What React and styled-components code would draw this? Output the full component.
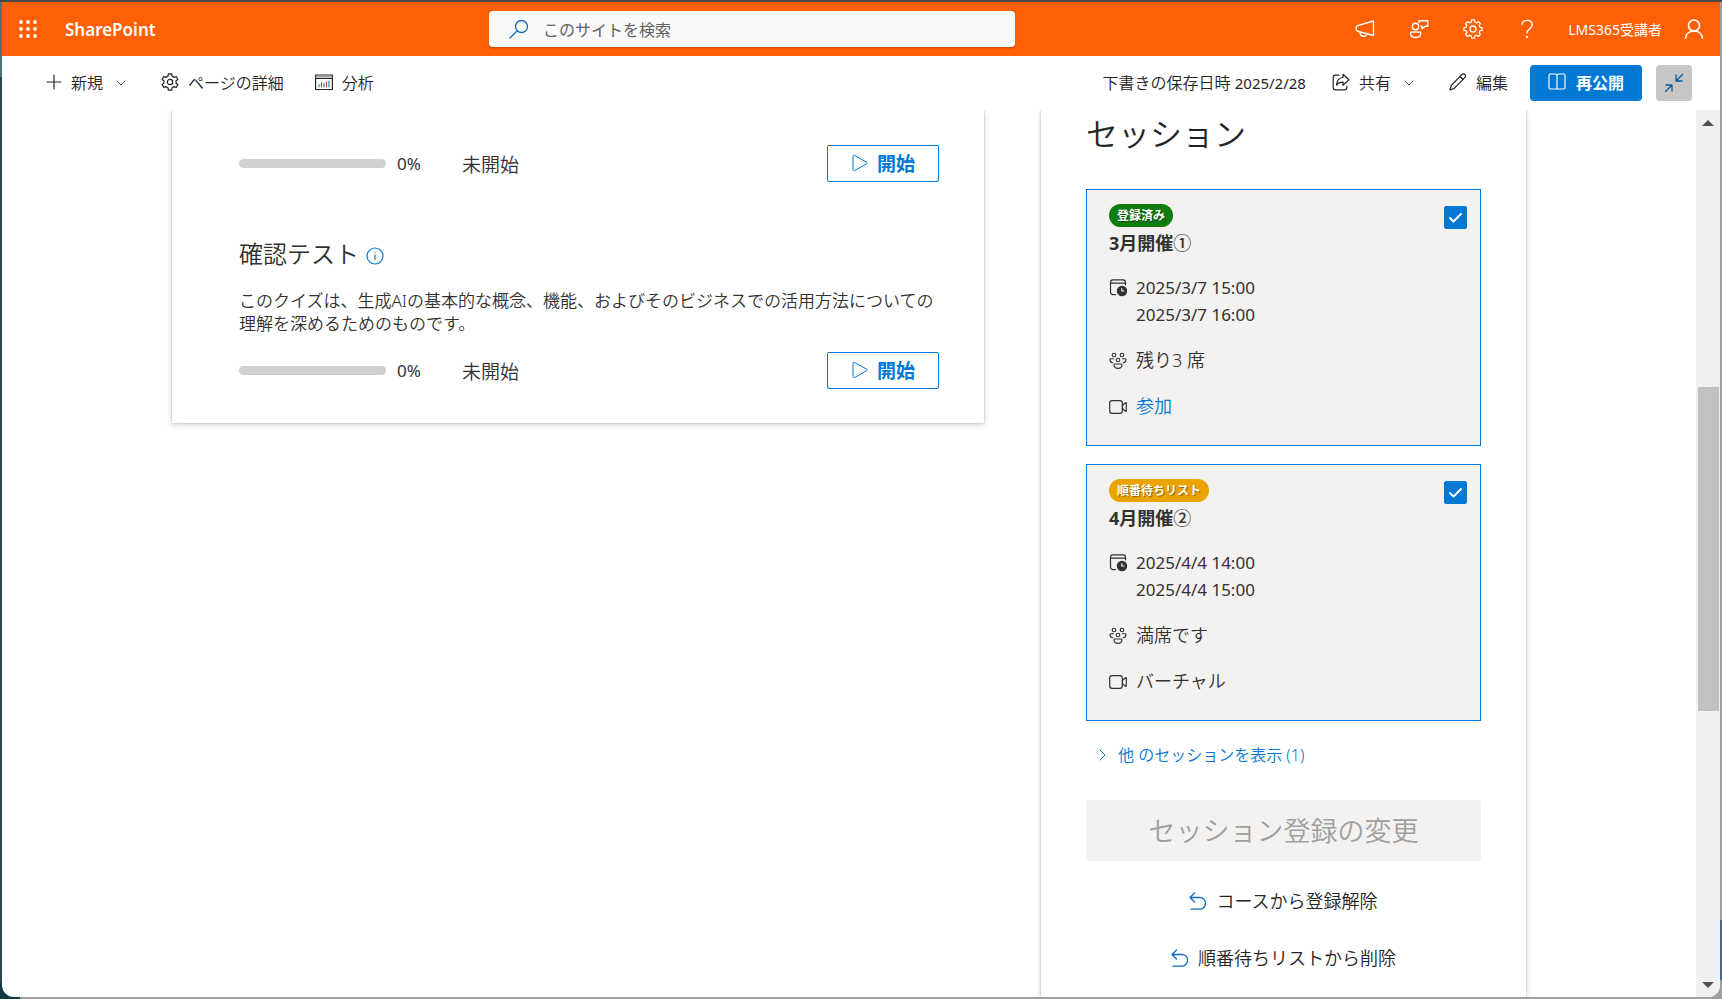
import React, { useState } from 'react';
import styled, { createGlobalStyle } from 'styled-components';

const GlobalStyle = createGlobalStyle`
  * {
    box-sizing: border-box;
  }

  body {
    margin: 0;
    color: #323130;
    font-family: 'Noto Sans', 'Noto Sans CJK JP', sans-serif;
    font-size: 16px;
    font-weight: 350;
  }

  button,
  input {
    font-family: inherit;
    font-weight: inherit;
    margin: 0;
    padding: 0;
  }

  h1, h2, h3, p {
    font-weight: inherit;
    margin: 0;
  }

  svg {
    display: block;
    flex: none;
  }
`;

/* Icons */

const Svg = ({ size = 18, stroke = 1, children }) => (
  <svg
    width={size}
    height={size}
    viewBox={`0 0 ${size} ${size}`}
    fill="none"
    stroke="currentColor"
    strokeWidth={stroke}
    strokeLinecap="round"
    strokeLinejoin="round"
    aria-hidden="true"
  >
    {children}
  </svg>
);

const gearPath = (teeth, outer, inner, center) => {
  const step = (Math.PI * 2) / teeth;
  const points = [];
  for (let i = 0; i < teeth; i += 1) {
    [
      [-0.3, inner],
      [-0.2, outer],
      [0.2, outer],
      [0.3, inner],
    ].forEach(([offset, radius]) => {
      const angle = (i + offset) * step - Math.PI / 2;
      const x = center + Math.cos(angle) * radius;
      const y = center + Math.sin(angle) * radius;
      points.push(`${x.toFixed(2)} ${y.toFixed(2)}`);
    });
  }
  return `M${points.join('L')}Z`;
};

const WaffleIcon = () => (
  <svg width="18" height="18" viewBox="0 0 18 18" fill="currentColor" aria-hidden="true">
    {[2, 9, 16].map((y) =>
      [2, 9, 16].map((x) => <circle key={`${x}-${y}`} cx={x} cy={y} r="1.9" />)
    )}
  </svg>
);

const SearchIcon = () => (
  <Svg size={20} stroke={1.3}>
    <circle cx="12.5" cy="7.5" r="6" />
    <path d="M8.2 11.8L1 19" />
  </Svg>
);

const MegaphoneIcon = () => (
  <Svg size={20} stroke={1.4}>
    <path d="M18.5 2v14.5L2.6 12.2C1.8 12 1.2 11.2 1.2 10.3V8.7C1.2 7.7 1.8 7 2.6 6.7Z" />
    <path d="M5 13c0 2.5 1.4 4.3 3.5 4.3 1.6 0 2.9-.9 3.3-2.4" />
  </Svg>
);

const FeedbackIcon = () => (
  <Svg size={20} stroke={1.4}>
    <circle cx="6.5" cy="7.5" r="3.2" />
    <path d="M2.7 13h7.8c.8 0 1.3.6 1.3 1.3 0 2.6-2 4.2-5.2 4.2s-5.2-1.6-5.2-4.2c0-.7.5-1.3 1.3-1.3Z" />
    <path d="M10 3.5V1.7h8.8v5.5h-2.6L13 9.8V7.2h-1" />
  </Svg>
);

const SettingsIcon = () => (
  <Svg size={20} stroke={1.3}>
    <path d={gearPath(8, 9.2, 7.2, 10)} />
    <circle cx="10" cy="10" r="3" />
  </Svg>
);

const HelpIcon = () => (
  <Svg size={20} stroke={1.4}>
    <path d="M5 5.5C5 3 7 1.4 10 1.4S15.2 3 15.2 5.7c0 4-5.2 4-5.2 8.3" />
    <circle cx="10" cy="18" r=".5" fill="currentColor" />
  </Svg>
);

const PersonIcon = () => (
  <Svg size={20} stroke={1.6}>
    <circle cx="10" cy="6.5" r="5.5" />
    <path d="M1.5 19.3C1.8 15 5 12 10 12s8.2 3 8.5 7.3" />
  </Svg>
);

const PlusIcon = () => (
  <Svg size={16} stroke={1.2}>
    <path d="M8 1v14M1 8h14" />
  </Svg>
);

const ChevronDownIcon = () => (
  <Svg size={10}>
    <path d="M1 3l4 4 4-4" />
  </Svg>
);

const ChevronRightIcon = () => (
  <Svg size={12}>
    <path d="M3 1l5 5-5 5" />
  </Svg>
);

const GearIcon = () => (
  <Svg stroke={1.2}>
    <path d={gearPath(6, 8.3, 6.2, 9)} />
    <circle cx="9" cy="9" r="2.7" />
  </Svg>
);

const AnalyticsIcon = () => (
  <Svg stroke={1.2}>
    <path d="M.6 2h16.8v14.5H.6ZM.6 5.5h16.8" />
    <path d="M.6 3.8h16.8" stroke="#777" strokeWidth="1" />
    <path d="M4 14v-2.5M9 14v-3.5M14 14V8" stroke="#2f7fc1" />
    <path d="M6.5 14V9.5M11.5 14V9" stroke="#a3512d" />
  </Svg>
);

const ShareIcon = () => (
  <Svg stroke={1.2}>
    <path d="M7 2.2H3.5C2.2 2.2 1.2 3.2 1.2 4.5v10c0 1.3 1 2.3 2.3 2.3h9c1.3 0 2.3-1 2.3-2.3V13" />
    <path d="M11 1.3l6 5.5-6 5.5V9.2c-3 0-5 .8-6.5 3C4.8 7.8 7.3 4.8 11 4.5Z" />
  </Svg>
);

const PencilIcon = () => (
  <Svg stroke={1.2}>
    <path d="M12.8 1.7c1-1 2.3-1 3.1-.2s.8 2.1-.2 3.1L5.2 15.4.9 17l1.4-4.5Z" />
    <path d="M11 3.5L14 6.5" />
  </Svg>
);

const BookIcon = () => (
  <Svg stroke={1.2}>
    <path d="M9 2v14M2.2 1h5.3C8.5 1 9 1.5 9 2.5 9 1.5 9.5 1 10.5 1h5.3c.8 0 1.2.4 1.2 1.2v12.6c0 .8-.4 1.2-1.2 1.2H2.2C1.4 16 1 15.6 1 14.8V2.2C1 1.4 1.4 1 2.2 1Z" />
  </Svg>
);

const CollapseIcon = () => (
  <Svg size={20} stroke={1.3}>
    <path d="M18.5 1.5L12 8M12 2v6h6M1.5 18.5L8 12M2 12h6v6" />
  </Svg>
);

const InfoIcon = () => (
  <Svg stroke={1.2}>
    <circle cx="9" cy="9" r="8" />
    <path d="M9 8v4.5M9 5.5v.2" />
  </Svg>
);

const PlayIcon = () => (
  <Svg>
    <path d="M2 2.2c0-.8.7-1.2 1.4-.8l12.3 6.8c.7.4.7 1.2 0 1.6L3.4 16.6c-.7.4-1.4 0-1.4-.8Z" />
  </Svg>
);

const CalendarClockIcon = () => (
  <Svg stroke={1.2}>
    <path d="M6.5 15.6H4c-1.5 0-2.5-1-2.5-2.5V3.3C1.5 1.8 2.5.8 4 .8h10c1.5 0 2.5 1 2.5 2.5v2.5M1.5 4.2h15" />
    <circle cx="13" cy="12" r="4.6" fill="currentColor" />
    <path d="M12.8 9.5V12H15" stroke="#f3f2f1" />
  </Svg>
);

const PeopleIcon = () => (
  <Svg stroke={1.1}>
    <circle cx="5" cy="3" r="1.8" />
    <circle cx="13" cy="3" r="1.8" />
    <circle cx="9" cy="8" r="1.8" />
    <path d="M5.8 12h6.4c.5 0 .8.3.8.8 0 2-1.6 3.6-4 3.6s-4-1.6-4-3.6c0-.5.3-.8.8-.8Z" />
    <path d="M4.5 6.8H1.8c-.5 0-.8.3-.8.8 0 1.7 1 3 2.8 3.2M13.5 6.8h2.7c.5 0 .8.3.8.8 0 1.7-1 3-2.8 3.2" />
  </Svg>
);

const VideoIcon = () => (
  <Svg stroke={1.2}>
    <rect x=".7" y="2.7" width="12.6" height="12.6" rx="2.3" />
    <path d="M13.3 7.5l3.2-2.8c.4-.3.8-.1.8.3v8c0 .4-.4.6-.8.3l-3.2-2.8" />
  </Svg>
);

const UndoIcon = () => (
  <Svg stroke={1.3}>
    <path d="M5.5 1L1 5.5 5.5 10M1 5.5h9.5c3.5 0 6 2.3 6 5.7s-2.5 6-6 6H2" />
  </Svg>
);

/* Window */

const Desktop = styled.div`
  background:
    linear-gradient(#464646, #464646) top / 100% 2px no-repeat,
    linear-gradient(#3a6a94, #3a6a94) right bottom 19px / 2px 60px no-repeat,
    linear-gradient(to right, #123a42 20px, transparent 20px) bottom / 100% 16px no-repeat,
    linear-gradient(#4a7578 77px, #24494f 77px) left / 2px 100% no-repeat,
    #a0a0a0;
  height: 100vh;
  padding: 2px;
`;

const Window = styled.div`
  background: #fff;
  border-radius: 0 0 12px 12px;
  display: flex;
  flex-direction: column;
  height: 100%;
  overflow: hidden;
`;

const SuiteBar = styled.header`
  align-items: center;
  background: #ff5f05;
  color: #fff;
  display: flex;
  flex: none;
  font-weight: 400;
  height: 54px;
  justify-content: space-between;
  padding: 0 16px;
`;

const SuiteStart = styled.div`
  align-items: center;
  display: flex;
  flex: 0 1 471px;
  gap: 27px;
`;

const IconButton = styled.button`
  align-items: center;
  background: none;
  border: 0;
  color: inherit;
  cursor: pointer;
  display: flex;
  height: 36px;
  justify-content: center;
  width: ${({ $width }) => $width || 20}px;
`;

const SuiteName = styled.a`
  color: inherit;
  font-size: 17px;
  font-weight: 600;
  text-decoration: none;
`;

const SearchBox = styled.label`
  align-items: center;
  background: #fafafa;
  border-radius: 4px;
  box-shadow: 0 1px 2px rgba(0, 0, 0, 0.25);
  color: #0f6cbd;
  display: flex;
  flex: 0 1 526px;
  gap: 14px;
  height: 36px;
  padding: 0 20px;
`;

const SearchInput = styled.input`
  background: none;
  border: 0;
  color: #323130;
  flex: 1;
  font-size: 16px;
  min-width: 0;
  outline: 0;
  padding-top: 2px;

  &::placeholder {
    color: #616161;
    opacity: 1;
  }
`;

const SuiteEnd = styled.div`
  align-items: center;
  display: flex;
  gap: 34px;
  margin-left: auto;
`;

const Account = styled.button`
  align-items: center;
  background: none;
  border: 0;
  color: inherit;
  cursor: pointer;
  display: flex;
  font-size: 14px;
  gap: 22px;
  margin-left: -3px;
  white-space: nowrap;
`;

const CommandBar = styled.nav`
  align-items: center;
  display: flex;
  flex: none;
  height: 54px;
  justify-content: space-between;
  padding: 0 28px 0 44px;
`;

const CommandGroup = styled.div`
  align-items: center;
  display: flex;
  gap: ${({ $gap }) => $gap}px;
`;

const Command = styled.button`
  align-items: center;
  background: none;
  border: 0;
  color: #242424;
  cursor: pointer;
  display: flex;
  font-size: 16px;
  gap: 9px;
  height: 36px;
  padding-bottom: 2px;
  white-space: nowrap;

  svg:last-child:not(:first-child) {
    color: #605e5c;
    margin: 2px 4px 0;
  }
`;

const SavedAt = styled.span`
  color: #242424;
  padding-bottom: 2px;
  white-space: nowrap;
`;

const DateText = styled.span`
  font-size: 15px;
  font-weight: 400;
`;

const PrimaryButton = styled.button`
  align-items: center;
  background: #0078d4;
  border: 0;
  border-radius: 4px;
  color: #fff;
  cursor: pointer;
  display: flex;
  font-size: 16px;
  font-weight: 700;
  gap: 10px;
  height: 36px;
  padding: 0 18px 2px;
  white-space: nowrap;
`;

const CollapseButton = styled(IconButton)`
  background: #c8c6c4;
  border-radius: 4px;
  color: #005a9e;
  margin-left: -8px;
`;

/* Page body */

const Body = styled.div`
  display: flex;
  flex: 1;
  min-height: 0;
`;

const Content = styled.main`
  align-items: flex-start;
  display: flex;
  flex: 1;
  gap: 57px;
  justify-content: center;
  overflow: hidden;
  padding: 0 32px;
`;

const Panel = styled.section`
  background: #fff;
  box-shadow: 0 2px 6px rgba(0, 0, 0, 0.16), 0 0 2px rgba(0, 0, 0, 0.24);
`;

const CoursePanel = styled(Panel)`
  flex: 0 1 812px;
  padding: 35px 45px 34px 67px;
`;

const SessionPanel = styled(Panel)`
  align-self: stretch;
  flex: 0 0 485px;
  padding: 3px 45px 27px;
`;

const ProgressRow = styled.div`
  align-items: center;
  display: flex;
  height: 37px;
`;

const Track = styled.div`
  background: #d2d0ce;
  border-radius: 5px;
  height: 9px;
  margin-right: 11px;
  overflow: hidden;
  width: 147px;
`;

const Fill = styled.div`
  background: #0078d4;
  height: 100%;
`;

const Percent = styled.span`
  font-size: 17px;
  font-weight: 400;
  width: 65px;
`;

const Status = styled.span`
  font-size: 19px;
`;

const StartButton = styled.button`
  align-items: center;
  background: #fff;
  border: 1px solid #0078d4;
  border-radius: 2px;
  color: #0078d4;
  cursor: pointer;
  display: flex;
  font-size: 19px;
  font-weight: 700;
  gap: 8px;
  height: 37px;
  justify-content: center;
  margin-left: auto;
  padding-bottom: 2px;
  width: 112px;
`;

const ItemTitle = styled.h2`
  align-items: center;
  display: flex;
  font-size: 24px;
  gap: 7px;
  line-height: 36px;
  margin-top: 54px;
`;

const InfoButton = styled(IconButton)`
  color: #0078d4;
  height: 18px;
  margin-top: 4px;
`;

const Description = styled.p`
  font-size: 17px;
  line-height: 23px;
  margin: 17px 0;
`;

const SessionHeading = styled.h1`
  color: #242424;
  font-size: 32px;
  line-height: 42px;
  margin-bottom: 34px;
`;

const SessionList = styled.div`
  display: flex;
  flex-direction: column;
  gap: 18px;
`;

const SessionCard = styled.article`
  background: #f3f2f1;
  border: 1px solid #0078d4;
  display: flex;
  justify-content: space-between;
  padding: 14px 13px 6px 22px;
`;

const Badge = styled.span`
  background: ${({ $color }) => $color};
  border-radius: 12px;
  color: #fff;
  display: inline-block;
  font-size: 12px;
  font-weight: 700;
  line-height: 23px;
  padding: 0 8px;
  text-shadow: 1px 1px 1px rgba(0, 0, 0, 0.4);
  vertical-align: top;
`;

const SessionTitle = styled.h3`
  font-size: 18px;
  font-weight: 700;
  line-height: 32px;
  margin-bottom: 15px;
`;

const CircledNumber = styled.span`
  font-weight: 500;
`;

const Detail = styled.div`
  align-items: flex-start;
  display: flex;
  font-size: 18px;
  gap: 9px;
  line-height: 27px;
  margin-bottom: 19px;

  > svg {
    margin-top: 5px;
  }
`;

const Times = styled.div`
  font-size: 17px;
  font-weight: 400;
`;

const BlueLink = styled.a`
  color: #0078d4;
  text-decoration: none;
`;

const CheckWrapper = styled.label`
  display: grid;
  height: 23px;
  margin-top: 2px;
  width: 23px;

  > * {
    grid-area: 1 / 1;
    place-self: center;
  }

  svg {
    color: #fff;
    pointer-events: none;
  }
`;

const CheckInput = styled.input`
  appearance: none;
  background: #fff;
  border: 1px solid #0078d4;
  border-radius: 2px;
  height: 23px;
  width: 23px;

  &:checked {
    background: #0078d4;
  }
`;

const MoreLink = styled(BlueLink)`
  align-items: center;
  display: flex;
  font-size: 16px;
  gap: 9px;
  line-height: 24px;
  margin: 22px 0 33px 11px;
`;

const ChangeButton = styled.button`
  background: #f3f2f1;
  border: 0;
  border-radius: 2px;
  color: #a19f9d;
  font-size: 27px;
  height: 61px;
  padding-bottom: 2px;
  width: 100%;
`;

const Actions = styled.div`
  align-items: center;
  display: flex;
  flex-direction: column;
  gap: 33px;
  margin-top: 28px;
`;

const ActionButton = styled.button`
  align-items: center;
  background: none;
  border: 0;
  color: #242424;
  cursor: pointer;
  display: flex;
  font-size: 18px;
  gap: 9px;
  line-height: 24px;

  svg {
    color: #0f6cbd;
  }
`;

const Scrollbar = styled.div`
  align-items: center;
  background: #f0f0f0;
  color: #505050;
  display: flex;
  flex: none;
  flex-direction: column;
  padding: 10px 0 9px;
  width: 24px;
`;

const ScrollTrack = styled.div`
  display: grid;
  flex: 1;
  grid-template-rows: 261fr 324fr 271fr;
  width: 21px;
`;

const Thumb = styled.div`
  background: #c1c1c1;
  grid-row: 2;
`;

const sessions = [
  {
    id: 'march',
    badge: '登録済み',
    color: '#107c10',
    title: '3月開催',
    number: '①',
    start: '2025/3/7 15:00',
    end: '2025/3/7 16:00',
    seats: '残り3 席',
    link: '参加',
  },
  {
    id: 'april',
    badge: '順番待ちリスト',
    color: '#eaa300',
    title: '4月開催',
    number: '②',
    start: '2025/4/4 14:00',
    end: '2025/4/4 15:00',
    seats: '満席です',
    place: 'バーチャル',
  },
];

function Progress({ value }) {
  return (
    <ProgressRow>
      <Track role="progressbar" aria-valuenow={value} aria-label="進行状況">
        <Fill style={{ width: `${value}%` }} />
      </Track>
      <Percent>{value}%</Percent>
      <Status>未開始</Status>
      <StartButton type="button">
        <PlayIcon />
        開始
      </StartButton>
    </ProgressRow>
  );
}

function Session({ session }) {
  const [checked, setChecked] = useState(true);

  return (
    <SessionCard>
      <div>
        <Badge $color={session.color}>{session.badge}</Badge>
        <SessionTitle>
          {session.title}
          <CircledNumber>{session.number}</CircledNumber>
        </SessionTitle>
        <Detail>
          <CalendarClockIcon />
          <Times>
            <div>{session.start}</div>
            <div>{session.end}</div>
          </Times>
        </Detail>
        <Detail>
          <PeopleIcon />
          {session.seats}
        </Detail>
        <Detail>
          <VideoIcon />
          {session.link ? <BlueLink href="#join">{session.link}</BlueLink> : session.place}
        </Detail>
      </div>
      <CheckWrapper>
        <CheckInput
          type="checkbox"
          aria-label={session.title}
          checked={checked}
          onChange={() => setChecked(!checked)}
        />
        <Svg size={15} stroke={2}>
          <path d="M2 8l3.5 3.5L13 4" />
        </Svg>
      </CheckWrapper>
    </SessionCard>
  );
}

export default function App() {
  return (
    <Desktop>
      <GlobalStyle />
      <Window>
        <SuiteBar>
          <SuiteStart>
            <IconButton type="button" aria-label="アプリ起動ツール">
              <WaffleIcon />
            </IconButton>
            <SuiteName href="#home">SharePoint</SuiteName>
          </SuiteStart>
          <SearchBox>
            <SearchIcon />
            <SearchInput type="search" placeholder="このサイトを検索" aria-label="このサイトを検索" />
          </SearchBox>
          <SuiteEnd>
            <IconButton type="button" aria-label="お知らせ">
              <MegaphoneIcon />
            </IconButton>
            <IconButton type="button" aria-label="フィードバック">
              <FeedbackIcon />
            </IconButton>
            <IconButton type="button" aria-label="設定">
              <SettingsIcon />
            </IconButton>
            <IconButton type="button" aria-label="ヘルプ">
              <HelpIcon />
            </IconButton>
            <Account type="button">
              LMS365受講者
              <PersonIcon />
            </Account>
          </SuiteEnd>
        </SuiteBar>

        <CommandBar>
          <CommandGroup $gap={31}>
            <Command type="button">
              <PlusIcon />
              新規
              <ChevronDownIcon />
            </Command>
            <Command type="button">
              <GearIcon />
              ページの詳細
            </Command>
            <Command type="button">
              <AnalyticsIcon />
              分析
            </Command>
          </CommandGroup>
          <CommandGroup $gap={31}>
            <CommandGroup $gap={26}>
              <SavedAt>
                下書きの保存日時 <DateText>2025/2/28</DateText>
              </SavedAt>
              <Command type="button">
                <ShareIcon />
                共有
                <ChevronDownIcon />
              </Command>
            </CommandGroup>
            <CommandGroup $gap={22}>
              <Command type="button">
                <PencilIcon />
                編集
              </Command>
              <PrimaryButton type="button">
                <BookIcon />
                再公開
              </PrimaryButton>
              <CollapseButton type="button" $width={36} aria-label="折りたたむ">
                <CollapseIcon />
              </CollapseButton>
            </CommandGroup>
          </CommandGroup>
        </CommandBar>

        <Body>
          <Content>
            <CoursePanel>
              <Progress value={0} />
              <ItemTitle>
                確認テスト
                <InfoButton type="button" $width={18} aria-label="情報">
                  <InfoIcon />
                </InfoButton>
              </ItemTitle>
              <Description>
                このクイズは、生成AIの基本的な概念、機能、およびそのビジネスでの活用方法についての理解を深めるためのものです。
              </Description>
              <Progress value={0} />
            </CoursePanel>

            <SessionPanel>
              <SessionHeading>セッション</SessionHeading>
              <SessionList>
                {sessions.map((session) => (
                  <Session key={session.id} session={session} />
                ))}
              </SessionList>
              <MoreLink href="#sessions">
                <ChevronRightIcon />
                他 のセッションを表示 (1)
              </MoreLink>
              <ChangeButton type="button" disabled>
                セッション登録の変更
              </ChangeButton>
              <Actions>
                <ActionButton type="button">
                  <UndoIcon />
                  コースから登録解除
                </ActionButton>
                <ActionButton type="button">
                  <UndoIcon />
                  順番待ちリストから削除
                </ActionButton>
              </Actions>
            </SessionPanel>
          </Content>
          <Scrollbar>
            <svg width="12" height="6" viewBox="0 0 12 6" fill="currentColor" aria-hidden="true">
              <path d="M0 6L6 0l6 6Z" />
            </svg>
            <ScrollTrack>
              <Thumb />
            </ScrollTrack>
            <svg width="12" height="6" viewBox="0 0 12 6" fill="currentColor" aria-hidden="true">
              <path d="M0 0l6 6 6-6Z" />
            </svg>
          </Scrollbar>
        </Body>
      </Window>
    </Desktop>
  );
}
